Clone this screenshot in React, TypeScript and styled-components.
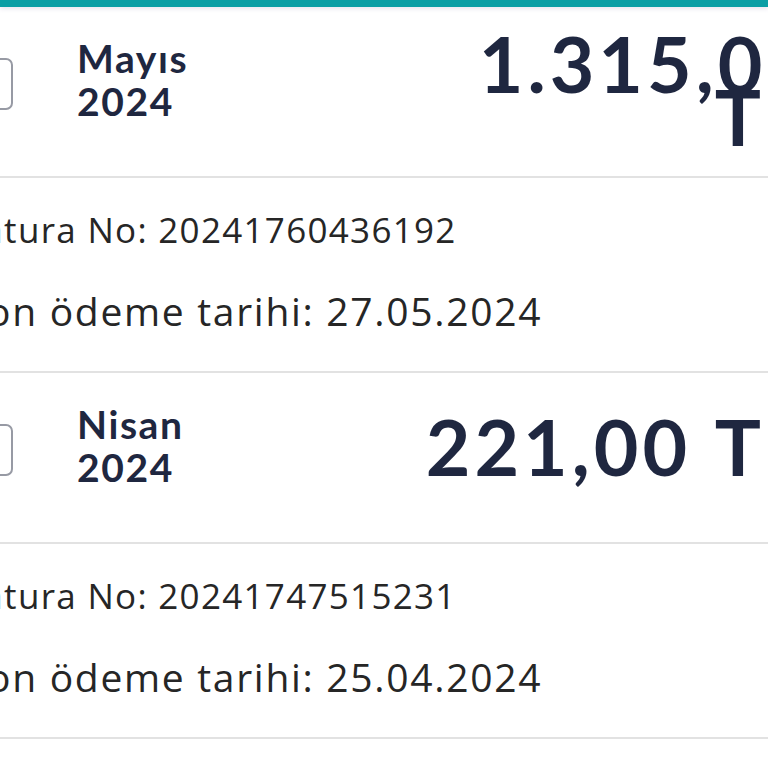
import React from "react";
import styled, { createGlobalStyle } from "styled-components";

const GlobalStyle = createGlobalStyle`
  html, body {
    margin: 0;
    padding: 0;
    background: #ffffff;
    overflow: hidden;
  }
  body {
    font-family: "Open Sans", "Noto Sans", sans-serif;
  }
`;

const Viewport = styled.div`
  width: 768px;
  height: 768px;
  overflow: hidden;
  background: #ffffff;
`;

const TopBar = styled.div`
  height: 7px;
  background: #0a9ea5;
  box-shadow: 0 2px 4px rgba(130, 110, 170, 0.18);
`;

const Page = styled.div`
  margin-left: -39px;
  width: 854px;
`;

const Card = styled.section`
  display: flex;
  flex-direction: column;
`;

const Header = styled.div`
  box-sizing: border-box;
  min-height: 171px;
  padding-top: 30px;
  border-bottom: 2px solid #e2e2e2;
  display: flex;
  align-items: flex-start;
`;

const HeaderRow = styled.div`
  width: 100%;
  display: flex;
  align-items: center;
`;

const Lead = styled.div`
  align-self: flex-start;
  display: flex;
  align-items: center;
  gap: 64px;
`;

const Checkbox = styled.span`
  box-sizing: border-box;
  width: 52px;
  height: 52px;
  margin-top: 8px;
  border: 2px solid #979aa4;
  border-radius: 7px;
  flex: none;
`;

const Period = styled.div`
  display: flex;
  flex-direction: column;
  font-family: "Lato", sans-serif;
  font-weight: 700;
  font-size: 39px;
  line-height: 43px;
  letter-spacing: 1.6px;
  color: #1f2740;
`;

const Amount = styled.div`
  flex: 0 1 420px;
  margin-left: auto;
  text-align: right;
  font-family: "Lato", sans-serif;
  font-weight: 700;
  font-size: 77px;
  line-height: 53px;
  letter-spacing: 4px;
  word-spacing: 1px;
  color: #1f2740;
`;

const Currency = styled.span`
  letter-spacing: 7px;
`;

const Details = styled.div`
  border-bottom: 2px solid #e2e2e2;
  padding: 30px 0 38px 3px;
  display: flex;
  flex-direction: column;
  gap: 37px;
`;

const DetailLine = styled.div<{ $size: number; $spacing: number }>`
  font-family: "Open Sans", sans-serif;
  font-weight: 400;
  font-size: ${(p) => p.$size}px;
  letter-spacing: ${(p) => p.$spacing}px;
  line-height: 44px;
  color: #262626;
  white-space: nowrap;
`;

type Invoice = {
  month: string;
  year: string;
  amount: string;
  number: string;
  due: string;
};

const invoices: Invoice[] = [
  {
    month: "Mayıs",
    year: "2024",
    amount: "1.315,00",
    number: "20241760436192",
    due: "27.05.2024",
  },
  {
    month: "Nisan",
    year: "2024",
    amount: "221,00",
    number: "20241747515231",
    due: "25.04.2024",
  },
];

export default function App() {
  return (
    <Viewport>
      <GlobalStyle />
      <TopBar />
      <Page>
        {invoices.map((inv) => (
          <Card key={inv.number}>
            <Header>
              <HeaderRow>
                <Lead>
                  <Checkbox />
                  <Period>
                    <span>{inv.month}</span>
                    <span>{inv.year}</span>
                  </Period>
                </Lead>
                <Amount>
                  {inv.amount} <Currency>TL</Currency>
                </Amount>
              </HeaderRow>
            </Header>
            <Details>
              <DetailLine $size={35} $spacing={1.3}>
                Fatura No: {inv.number}
              </DetailLine>
              <DetailLine $size={39} $spacing={1.7}>
                Son ödeme tarihi: {inv.due}
              </DetailLine>
            </Details>
          </Card>
        ))}
      </Page>
    </Viewport>
  );
}
